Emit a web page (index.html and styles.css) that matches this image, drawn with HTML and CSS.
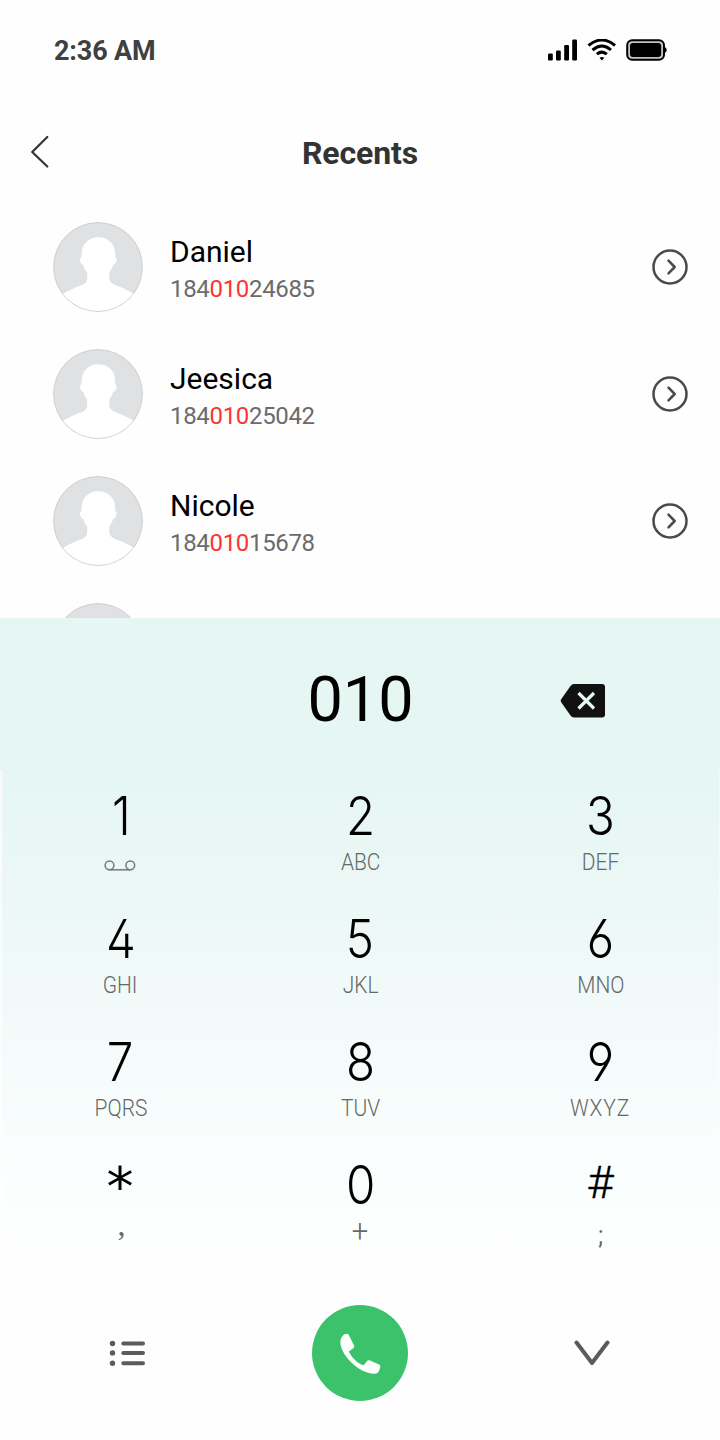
FILE: index.html
```html
<!DOCTYPE html>
<html lang="en">
<head>
<meta charset="utf-8">
<title>Recents</title>
<link rel="stylesheet" href="styles.css">
</head>
<body>
<svg class="defs" width="0" height="0" aria-hidden="true">
  <symbol id="avatar" viewBox="0 0 90 90">
    <clipPath id="disc"><circle cx="45" cy="45" r="44"/></clipPath>
    <circle cx="45" cy="45" r="44.4" fill="#e0e1e3" stroke="#cfcfcf" stroke-width="1"/>
    <path clip-path="url(#disc)" fill="#fff" d="M8 92V73C18 67 26 64 30 62.500C33 61 34.200 59 34.200 56V50.500C32 48 31 46 30.500 43C28.500 43 27 40 27 37.500C27 36 27.800 35.500 28.600 35.500V32C28.600 22 35.500 15.200 45.400 15.200S62.200 22 62.200 32V35.500C63 35.500 63.600 36 63.600 37.500C63.600 40 62 43 60 43C59.500 46 58 48 56.300 50.500V56C56.300 59 58 61 61 62.500C65 64 73 67 83 73V92Z"/>
  </symbol>
  <symbol id="more" viewBox="0 0 36 36">
    <g fill="none" stroke="#4a4a4a" stroke-width="2.500" stroke-linecap="round" stroke-linejoin="round">
      <circle cx="18" cy="18" r="16.500"/><path d="M16.500 11.700L22.700 18L16.500 24.300"/>
    </g>
  </symbol>
</svg>
<div class="phone">
  <div class="status">
    <span class="time">2:36 AM</span>
    <svg width="120" height="24" viewBox="0 0 120 24">
      <rect x="0" y="14.500" width="4.800" height="7" rx="1.200"/><rect x="8" y="11.500" width="4.800" height="10" rx="1.200"/><rect x="16.200" y="6" width="4.800" height="15.500" rx="1.200"/><rect x="24.200" y="0.500" width="4.800" height="21" rx="1.200"/>
      <g fill="none" stroke="#000" stroke-width="3"><path d="M40.500 6.500Q54-4.500 67 6.500"/><path d="M44.500 11Q54 3 63 11"/><path d="M48.800 15.200Q54 11 58.800 15.200"/></g>
      <path d="M51.500 18.700Q54 17.200 56.300 18.700L54 21.500Z"/>
      <rect x="79.200" y="1.200" width="36.800" height="19.600" rx="5" fill="#c4c4c4" stroke="#000" stroke-width="2"/>
      <rect x="82" y="4" width="31.200" height="14" rx="3"/><path d="M117 8Q120.500 11 117 14Z"/>
    </svg>
  </div>
  <div class="header">
    <svg class="back" width="20" height="34" viewBox="0 0 20 34"><path d="M17.300 2L2.200 17L17.300 31.500" fill="none" stroke="#333" stroke-width="2.200" stroke-linecap="round" stroke-linejoin="round"/></svg>
    <h1>Recents</h1>
  </div>
  <div class="list">
    <div class="row"><svg class="avatar"><use href="#avatar"/></svg><div class="who"><div class="name">Daniel</div><div class="num">184<b>010</b>24685</div></div><svg class="more"><use href="#more"/></svg></div>
    <div class="row"><svg class="avatar"><use href="#avatar"/></svg><div class="who"><div class="name">Jeesica</div><div class="num">184<b>010</b>25042</div></div><svg class="more"><use href="#more"/></svg></div>
    <div class="row"><svg class="avatar"><use href="#avatar"/></svg><div class="who"><div class="name">Nicole</div><div class="num">184<b>010</b>15678</div></div><svg class="more"><use href="#more"/></svg></div>
    <div class="row"><svg class="avatar"><use href="#avatar"/></svg></div>
  </div>
  <div class="entry">
    <span class="typed">010</span>
    <svg class="erase" width="46" height="34" viewBox="0 0 46 34"><path d="M14 0H42Q45 0 45 3V30.500Q45 33.500 42 33.500H14Q12 33.500 10.500 31.500L1 18Q.400 16.800 1 15.600L10.500 2Q12 0 14 0Z" fill="#111"/><path d="M18.500 9L34 24.500M34 9L18.500 24.500" stroke="#e5f6f3" stroke-width="3.200"/></svg>
  </div>
  <div class="keys">
    <div class="key"><span class="digit one">1</span><svg class="vm" width="32" height="11" viewBox="0 0 32 11"><g fill="none" stroke="#747878" stroke-width="1.500"><circle cx="5.500" cy="5.300" r="4.400"/><circle cx="26.300" cy="5.300" r="4.400"/><path d="M5.500 9.800H26.300"/></g></svg></div>
    <div class="key"><span class="digit">2</span><span class="sub">ABC</span></div>
    <div class="key"><span class="digit">3</span><span class="sub">DEF</span></div>
    <div class="key"><span class="digit">4</span><span class="sub">GHI</span></div>
    <div class="key"><span class="digit">5</span><span class="sub">JKL</span></div>
    <div class="key"><span class="digit">6</span><span class="sub">MNO</span></div>
    <div class="key"><span class="digit">7</span><span class="sub">PQRS</span></div>
    <div class="key"><span class="digit">8</span><span class="sub">TUV</span></div>
    <div class="key"><span class="digit">9</span><span class="sub wide">WXYZ</span></div>
    <div class="key"><span class="digit star">*</span><span class="sub comma">,</span></div>
    <div class="key"><span class="digit">0</span><span class="sub plus">+</span></div>
    <div class="key"><span class="digit hash">#</span><span class="sub semi">;</span></div>
  </div>
  <div class="actions">
    <svg class="menu" width="38" height="28" viewBox="0 0 38 28"><g stroke="#5b5b5b" stroke-linecap="round" fill="#5b5b5b"><path d="M14.300 4.500H34M14.300 13.900H34M14.300 24.300H34" stroke-width="4"/><g stroke="none"><circle cx="3.500" cy="4.500" r="2.700"/><circle cx="3.500" cy="13.900" r="2.700"/><circle cx="3.500" cy="24.300" r="2.700"/></g></g></svg>
    <svg class="call" width="96" height="96" viewBox="0 0 96 96"><circle cx="48" cy="48" r="48" fill="#3dc26c"/><path fill="#fff" d="M32 29.500L34.500 28.800Q36 28.500 36.800 30L42 40.500Q42.800 42 41.500 43L36.800 46.500C39.500 52 45 58 50.200 59.900Q52 60.300 53 58.800L55 56Q56 54.800 57.500 55.300L67 59.500Q69 60.500 68.200 62.500L67 66Q66 68.500 63 68.700C48 69.500 26.500 49 28.500 35Q29.500 31.500 32 29.500Z"/></svg>
    <svg class="hide" width="36" height="28" viewBox="0 0 36 28"><path d="M2.500 3.500L18 24L33.500 3.500" fill="none" stroke="#5b5b5b" stroke-width="4" stroke-linecap="round" stroke-linejoin="round"/></svg>
  </div>
</div>
</body>
</html>
```
FILE: styles.css
```css
* { box-sizing: border-box; }
body { margin: 0; background: #fefefe; font-family: Roboto, "Liberation Sans", sans-serif; }
.defs { position: absolute; }
svg { display: block; flex: none; }
.phone { width: 720px; height: 1440px; display: flex; flex-direction: column; overflow: hidden; }
.phone > * { flex: none; }
.status { height: 102px; padding: 0 52px 0 54px; display: flex; align-items: center; justify-content: space-between; }
.time { font-size: 27px; font-weight: 700; color: #404040; letter-spacing: -.15px; }
.header { height: 101px; padding: 0 30px; display: grid; grid-template-columns: 20px 1fr 20px; align-items: center; }
.back { margin-top: -2px; }
.header h1 { margin: 1px 0 0; font-size: 32px; font-weight: 700; text-align: center; color: #333; letter-spacing: -.1px; }
.list { height: 415px; overflow: hidden; }
.row { height: 127px; padding: 0 32px 0 53px; display: flex; align-items: center; }
.avatar { width: 90px; height: 90px; }
.who { flex: 1; padding: 8px 0 0 27px; }
.name { font-size: 30px; line-height: 36px; color: #000; }
.num { margin-top: 1px; font-size: 24px; line-height: 36px; color: #6b6b6b; letter-spacing: -.33px; }
.num b { font-weight: 400; color: #fb3535; }
.more { width: 36px; height: 36px; }
.entry { height: 152px; background: #e5f6f3; display: grid; grid-template-columns: 200px 1fr 200px; align-items: center; padding-top: 12px; }
.typed { grid-column: 2; padding-left: 1px; text-align: center; font-size: 63px; line-height: 72px; color: #000; }
.erase { margin: 2px 0 0 40px; }
.keys { height: 492px; padding-top: 13px; display: grid; grid-template: repeat(4, 123px) / repeat(3, 240px); background: linear-gradient(90deg, rgba(255,255,255,.7) 1px, transparent 3px, transparent 718px, rgba(255,255,255,.6) 720px), linear-gradient(#e5f6f3, #ecf8f6 28%, #f4fbfa 55%, #fbfefe 82%, #fefefe 97%); }
.key { display: flex; flex-direction: column; align-items: center; }
.digit { height: 66px; line-height: 66px; font-size: 54px; color: #000; font-family: Inter, Roboto, sans-serif; font-weight: 300; font-feature-settings: "cv02", "cv03", "cv04"; transform: scaleX(.88); padding-left: 1px; }
.one { padding-left: 4px; }
.sub { height: 28px; line-height: 28px; padding-left: 1px; font-size: 23px; font-weight: 300; color: #646868; transform: scaleX(.91); }
.vm { margin: 11px 0 0 0; }
.wide { letter-spacing: 1px; }
.star { font-family: "DejaVu Sans", sans-serif; font-weight: 400; line-height: 70px; transform: none; padding: 0; }
.hash { font-family: Roboto, sans-serif; font-size: 45px; line-height: 61px; transform: scaleX(1.04); -webkit-text-stroke: .3px #000; padding: 0; }
.comma { font-family: "Liberation Serif", serif; font-size: 32px; margin-top: -8px; padding-left: 3px; transform: none; }
.plus { font-size: 32px; margin-top: -1px; }
.semi { margin-top: 4px; font-weight: 400; font-size: 25px; }
.actions { height: 178px; padding-top: 4px; display: grid; grid-template-columns: repeat(3, 240px); align-items: center; justify-items: center; }
.menu { margin-left: 16px; }
.call { margin-right: 1px; }
.hide { margin-right: 16px; }
```
